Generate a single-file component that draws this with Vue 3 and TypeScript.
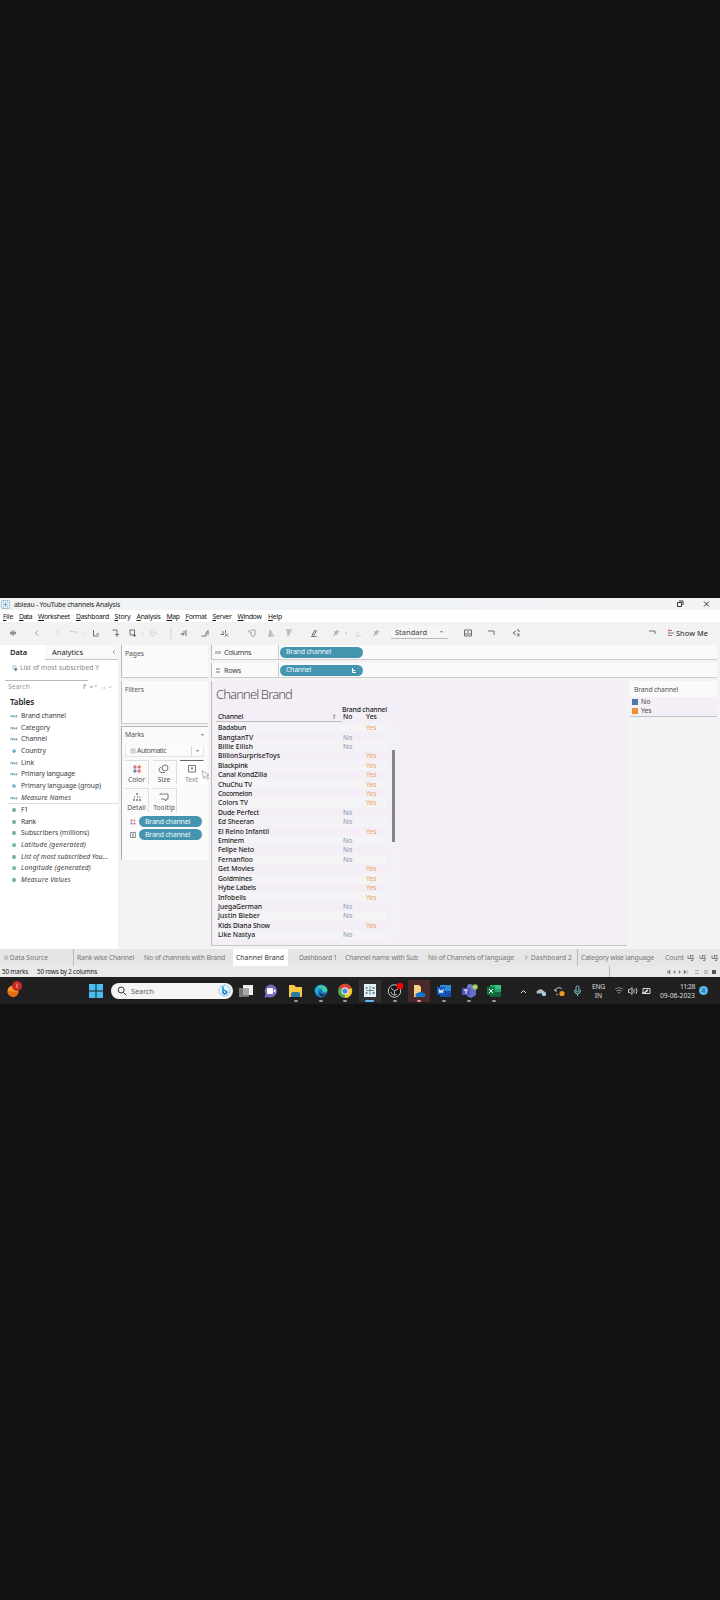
<script setup lang="ts">
interface Item { t: string; w: number; gap?: number }
interface Field extends Item { kind: string; italic?: boolean }

// Adjusts tracking so a label occupies its designed width.
const vFit = {
  mounted(el: HTMLElement, b: { value: number }) {
    const natural = el.getBoundingClientRect().width
    const count = (el.textContent || '').trim().length
    if (b.value && count) el.style.letterSpacing = `${(b.value - natural) / count}px`
  },
}

const menus: Item[] = [
  { t: 'File', w: 10, gap: 3 }, { t: 'Data', w: 13, gap: 6 }, { t: 'Worksheet', w: 32, gap: 6 },
  { t: 'Dashboard', w: 33, gap: 6 }, { t: 'Story', w: 16, gap: 5.5 }, { t: 'Analysis', w: 24, gap: 6 },
  { t: 'Map', w: 13, gap: 6 }, { t: 'Format', w: 21, gap: 6 }, { t: 'Server', w: 19, gap: 6 },
  { t: 'Window', w: 24, gap: 6 }, { t: 'Help', w: 14, gap: 6.5 },
]

const I = {
  logo: 'M5 2V8M2 5H8M3 3.5V6.5M7 3.5V6.5',
  back: 'M6 2.5L3.5 5L6 7.5', fwd: 'M4 2.5L6.5 5L4 7.5', undo: 'M2 5V3.5H7V5M2 3.5L3.5 2M9 3V5',
  dot: 'M4.3 5H5.7', save: 'M2.5 2V8H7.5M5.5 6H8', add: 'M2.5 2H7V5M5 6.5H9M7 5V9',
  pin: 'M2.5 2H7.5V7H3V2M6 7.5H9M7.5 6V9', ring: 'M5 2A3 3 0 1 1 4.9 2M3 5H7', pen: 'M1.5 6H5V3M4 7.5V5M7 2V8',
  penb: 'M1.5 8H6V5M6 5L8 2.5V7', barx: 'M1.5 6.5H5M4 3V7M6.5 2V5M6 5.5L9 8.5M9 5.5L6 8.5', swap: 'M2 2V4H4M4 2H8V5M4 4V7L6 9L8 7V5',
  asc: 'M2 8H8M3 6H7M4 4H6M4 2V8', desc: 'M2 2H8M3 4H7M4 6H6M4 2V8', mark: 'M3 7L6 2L7.5 3L5 7H3M2 8.5H7.5',
  clip: 'M3 8L6 2M5 7L8 3M3 4H7', under: 'M2 8H8M5 3V6', pic: 'M1.5 2H8.5V8H1.5ZM3 7V5M5 7V3M7 7V5', pres: 'M2 3H8V7',
  share: 'M2 5L5 3M2 5L5 7M6 2H8V4M6 6H8V8H6',
}
const tools = [
  { d: I.logo, x: 13, k: 'strong' }, { d: I.back, x: 37, k: 'soft' }, { d: I.fwd, x: 57, k: 'pale' }, { d: I.undo, x: 73, k: 'pale' },
  { d: I.dot, x: 85, k: 'pale' }, { d: I.save, x: 96, k: 'strong' }, { d: I.add, x: 115, k: 'strong' }, { d: I.pin, x: 132, k: 'strong' },
  { d: I.dot, x: 143, k: 'pale' }, { d: I.ring, x: 153, k: 'pale' }, { d: 'M5 -1V11', x: 171, k: 'pale' }, { d: I.pen, x: 184, k: 'strong' }, { d: I.penb, x: 205, k: 'strong' },
  { d: I.barx, x: 224, k: 'strong' }, { d: I.swap, x: 252, k: 'soft' }, { d: I.asc, x: 271, k: 'soft' }, { d: I.desc, x: 289, k: 'soft' },
  { d: I.mark, x: 314, k: 'strong' }, { d: I.clip, x: 336, k: 'soft' }, { d: I.dot, x: 346, k: 'soft' }, { d: I.under, x: 358, k: 'pale' }, { d: I.clip, x: 376, k: 'soft' },
].map((v, i, a) => ({ ...v, gap: v.x - 5 - (i ? a[i - 1].x + 5 : 0) }))

const fields: Field[] = [
  { t: 'Brand channel', w: 45, kind: 'abc' }, { t: 'Category', w: 29, kind: 'abc' }, { t: 'Channel', w: 26, kind: 'abc' },
  { t: 'Country', w: 25, kind: 'geo' }, { t: 'Link', w: 13, kind: 'abc' }, { t: 'Primary language', w: 54, kind: 'abc' },
  { t: 'Primary language (group)', w: 80, kind: 'grp' }, { t: 'Measure Names', w: 50, kind: 'abc', italic: true },
]
const measures: Field[] = [
  { t: 'F1', w: 7, kind: 'num' }, { t: 'Rank', w: 15, kind: 'num' }, { t: 'Subscribers (millions)', w: 68, kind: 'num' },
  { t: 'Latitude (generated)', w: 65, kind: 'globe', italic: true }, { t: 'List of most subscribed You…', w: 87, kind: 'num', italic: true },
  { t: 'Longitude (generated)', w: 70, kind: 'globe', italic: true }, { t: 'Measure Values', w: 50, kind: 'num', italic: true },
]
const rows: [string, number, boolean][] = [
  ['Badabun', 28, true], ['BangtanTV', 35, false], ['Billie Eilish', 35, false], ['BillionSurpriseToys', 62, true],
  ['Blackpink', 30, true], ['Canal KondZilla', 49, true], ['ChuChu TV', 34, true], ['Cocomelon', 34, true], ['Colors TV', 30, true],
  ['Dude Perfect', 41, false], ['Ed Sheeran', 36, false], ['El Reino Infantil', 51, true], ['Eminem', 26, false],
  ['Felipe Neto', 36, false], ['Fernanfloo', 35, false], ['Get Movies', 36, true], ['Goldmines', 34, true], ['Hybe Labels', 38, true],
  ['Infobells', 28, true], ['JuegaGerman', 44, false], ['Justin Bieber', 42, false], ['Kids Diana Show', 52, true], ['Like Nastya', 37, false],
]
const cards = ['Color', 'Size', 'Text', 'Detail', 'Tooltip']
const sheets = [
  { t: '⌸ Data Source', w: 44, cell: 74, pad: 4, k: 'line' }, { t: 'Rank wise Channel', w: 57, cell: 67, pad: 3, k: '' },
  { t: 'No of channels with Brand', w: 81, cell: 92, pad: 3, k: '' }, { t: 'Channel Brand', w: 48, cell: 55, pad: 3, k: 'on' },
  { t: 'Dashboard 1', w: 38, cell: 54, pad: 11, k: '' }, { t: 'Channel name with Sub', w: 73, cell: 82, pad: 3, k: '' },
  { t: 'No of Channels of language', w: 86, cell: 98, pad: 4, k: '' }, { t: '⊦  Dashboard 2', w: 47, cell: 56, pad: 3, k: 'line' },
  { t: 'Category wise language', w: 73, cell: 84, pad: 3, k: '' }, { t: 'Count', w: 19, cell: 25, pad: 3, k: '' },
]
const apps = ['view', 'chat', 'folder', 'edge', 'chrome', 'tableau', 'obs', 'cloudfolder', 'word', 'teams', 'excel']
</script>

<template>
  <div class="screen">
    <div class="window">
      <header class="title">
        <svg width="9" height="9" viewBox="0 0 9 9"><rect x=".5" y=".5" width="8" height="8" rx="1" fill="#e8f5f8" stroke="#9fc6d0" /><path d="M4.5 2.5V6.5M2.5 4.5H6.5M2 2H3M6 2H7M2 7H3M6 7H7" stroke="#4c92a5" stroke-width=".8" /></svg>
        <span v-fit="106" class="name">ableau - YouTube channels Analysis</span>
        <svg class="winbtns" width="36" height="10" viewBox="0 0 36 10" fill="none" stroke="#222"><path d="M2.5 3.5H6.5V7.5H2.5ZM4 2H8V6M29 2.5L34 7.5M34 2.5L29 7.5" stroke-width=".9" /></svg>
      </header>
      <nav class="menu">
        <span v-for="m in menus" :key="m.t" class="mi" :style="{ marginLeft: m.gap + 'px', width: m.w + 'px' }"><span v-fit="m.w"><u>{{ m.t[0] }}</u>{{ m.t.slice(1) }}</span></span>
      </nav>
      <div class="toolbar">
        <svg v-for="t in tools" :key="t.x" :class="['tool', t.k]" viewBox="0 0 10 10" :style="{ marginLeft: t.gap + 'px' }"><path :d="t.d" /></svg>
        <div class="standard"><span v-fit="32">Standard</span><i class="car"></i></div>
        <svg class="tool strong pic" viewBox="0 0 10 10"><path :d="I.pic" /></svg>
        <svg class="tool strong pr" viewBox="0 0 10 10"><path :d="I.pres" /></svg>
        <svg class="tool strong sh" viewBox="0 0 10 10"><path :d="I.share" /></svg>
        <svg class="tool strong pw" viewBox="0 0 10 10"><path d="M2 3H8V6" /></svg>
        <svg class="show" viewBox="0 0 6 8"><path d="M.5 0V7" stroke="#c9a3a3" /><path d="M1 1.5H4M1 6.5H4" stroke="#b66" /><path d="M1 4H6" stroke="#667fa5" /></svg>
        <span v-fit="32" class="showme">Show Me</span>
      </div>

      <main class="work">
        <aside class="data">
          <div class="tabs"><b><span v-fit="17">Data</span></b><div class="ana"><span v-fit="31">Analytics</span><svg width="4" height="6" viewBox="0 0 4 6"><path d="M3 1L1 3L3 5" fill="none" stroke="#888" stroke-width=".8" /></svg></div></div>
          <div class="source"><svg width="6" height="8" viewBox="0 0 6 8"><path d="M1 1V5H3M2 2H4V5" fill="none" stroke="#9cb0ba" stroke-width=".8" /><path d="M2 4.5H5.5L3.8 7.5Z" fill="#36718b" /></svg><span v-fit="79">List of most subscribed Y</span></div>
          <div class="search"><span v-fit="22">Search</span><svg width="32" height="6" viewBox="0 0 32 6" fill="none" stroke="#888" stroke-width=".8"><path d="M2 1H5L3 3V5M9 2L10.5 4L12 2M14 2H16M21 4H22M23 4H24M28 2.5L29 3.5L30 2.5" /></svg></div>
          <h4><span v-fit="24">Tables</span></h4>
          <ul>
            <li v-for="f in fields" :key="f.t" :class="{ it: f.italic }">
              <svg width="8" height="6" viewBox="0 0 8 6"><path v-if="f.kind === 'abc'" d="M1 4V2.5H2.5V4.5M4 2V4H5V2.8M7.3 2.6H6.3V4H7.3" fill="none" stroke="#568da6" stroke-width=".8" /><g v-else><circle cx="4" cy="3" r="1.8" fill="#4996b2" /><path v-if="f.kind === 'grp'" d="M2 5L6 1" stroke="#fff" stroke-width=".7" /><path v-else d="M4 1V3H2" fill="none" stroke="#cde" stroke-width=".7" /></g></svg>
              <span v-fit="f.w">{{ f.t }}</span>
            </li>
          </ul>
          <ul class="meas">
            <li v-for="f in measures" :key="f.t" :class="{ it: f.italic }">
              <svg width="8" height="6" viewBox="0 0 8 6"><path v-if="f.kind === 'num'" d="M3.3 1V5M4.8 1V5M2.3 2.2H5.8M2.3 3.8H5.8" stroke="#5f9d83" stroke-width=".9" /><g v-else><circle cx="4" cy="3" r="2" fill="#5bae91" /><path d="M4 1V3H2" stroke="#d4eee5" fill="none" stroke-width=".6" /></g></svg>
              <span v-fit="f.w">{{ f.t }}</span>
            </li>
          </ul>
        </aside>

        <section class="shelves">
          <div class="card pages"><span v-fit="19">Pages</span></div>
          <div class="card filters"><span v-fit="19">Filters</span></div>
          <div class="card marks">
            <div class="mh"><span v-fit="19">Marks</span><i class="car"></i></div>
            <div class="auto"><svg width="6" height="6" viewBox="0 0 6 6"><path d="M1 1H5V5H1ZM2 2H4M3 2V4" fill="none" stroke="#aaa" stroke-width=".7" /></svg><span v-fit="29">Automatic</span><em><i class="car"></i></em></div>
            <div class="grid">
              <div v-for="c in cards" :key="c" :class="['mk', c]">
                <svg width="12" height="12" viewBox="0 0 12 12" fill="none" stroke="#777">
                  <g v-if="c === 'Color'" stroke="none"><circle cx="4" cy="4" r="1.7" fill="#d2738e" /><circle cx="8.2" cy="4" r="1.7" fill="#dd7a62" /><circle cx="4" cy="8" r="1.7" fill="#6287bc" /><circle cx="8.2" cy="8" r="1.7" fill="#ef7180" /></g>
                  <path v-else-if="c === 'Size'" d="M10 5A3 3 0 1 1 7 2A3 3 0 0 1 10 5M3 4A2.5 2.5 0 0 0 5 9.5H7" />
                  <path v-else-if="c === 'Text'" d="M2.5 2.5H9.5V9H2.5ZM4.5 5H7.5M6 5V7" />
                  <path v-else-if="c === 'Detail'" d="M5 3H7M3 6H4M6 6H7M8.5 6H9.5M2 9H4M5 9H7M8 9H10" stroke-width="1.4" />
                  <path v-else d="M2 4V3H10V8H8V10L6 8H3" />
                </svg><span>{{ c }}</span>
              </div>
            </div>
            <div class="enc"><svg width="8" height="8" viewBox="0 0 8 8"><g><circle cx="2.5" cy="2.5" r="1.1" fill="#c96a7c" /><circle cx="5.5" cy="2.5" r="1.1" fill="#dd9a7a" /><circle cx="2.5" cy="5.5" r="1.1" fill="#6b8bbd" /><circle cx="5.5" cy="5.5" r="1.1" fill="#d96c6c" /></g></svg><span class="pill"><span v-fit="45">Brand channel</span></span></div>
            <div class="enc"><svg width="8" height="8" viewBox="0 0 8 8"><path d="M1.5 1.5H6.5V6.5H1.5ZM3 3H5M3 5H5M4 3V5" fill="none" stroke="#777" stroke-width=".8" /></svg><span class="pill"><span v-fit="45">Brand channel</span></span></div>
            <svg class="cursor" width="7" height="12" viewBox="0 0 7 12"><path d="M1 1V9L3 7.2L4.5 10.5L5.8 9.8L4.5 6.8H6.8Z" fill="#fff" stroke="#999" stroke-width=".7" /></svg>
          </div>
        </section>

        <section class="canvas">
          <div class="shelf"><div class="sl"><svg width="6" height="5" viewBox="0 0 6 5"><path d="M1 1V4M3 1V4M5 1V4" stroke="#777" stroke-width=".9" /></svg><span v-fit="27">Columns</span></div><span class="pill"><span v-fit="45">Brand channel</span></span></div>
          <div class="shelf"><div class="sl"><svg width="6" height="5" viewBox="0 0 6 5"><path d="M1 1H5M1 4H5" stroke="#777" /></svg><span v-fit="17">Rows</span></div><span class="pill"><span v-fit="25">Channel</span><svg width="6" height="5" viewBox="0 0 6 5"><path d="M1.5 0V4.5H5M2 2.5H4" stroke="#fff" fill="none" /></svg></span></div>
          <div class="lower">
            <div class="viz">
              <h2><span v-fit="76">Channel Brand</span></h2>
              <div class="dimhead"><span v-fit="45">Brand channel</span></div>
              <div class="cols"><div class="ch"><span v-fit="25">Channel</span><svg width="4" height="5" viewBox="0 0 4 5"><path d="M1 1H3V2L1 4H3" stroke="#777" fill="none" stroke-width=".7" /></svg></div><span class="no">No</span><span>Yes</span></div>
              <div class="tbl">
                <div v-for="r in rows" :key="r[0]" class="row"><div><span v-fit="r[1]">{{ r[0] }}</span></div><span class="n">{{ r[2] ? '' : 'No' }}</span><span class="y">{{ r[2] ? 'Yes' : '' }}</span></div>
                <i class="thumb"></i>
              </div>
            </div>
            <div class="legend"><div class="lt"><span v-fit="44">Brand channel</span></div><p><i></i><span>No</span></p><p class="or"><i></i><span>Yes</span></p></div>
          </div>
        </section>
      </main>

      <div class="sheets">
        <div v-for="s in sheets" :key="s.t" :class="['sheet', s.k]" :style="{ width: s.cell + 'px', paddingLeft: s.pad + 'px' }"><span v-fit="s.w">{{ s.t }}</span></div>
        <svg width="32" height="8" viewBox="0 0 32 8" fill="none" stroke="#777" stroke-width=".9"><path v-for="x in [1, 13, 25]" :key="x" :d="`M${x} 1.5V4.5H${x + 5}M${x + 2.5} 1.5V4.5M${x + 2} 1.5H${x + 5}V6.5H${x + 3}`" /></svg>
      </div>
      <div class="status"><span v-fit="26">50 marks</span><span v-fit="60" class="rc">50 rows by 2 columns</span>
        <div class="nav"><svg width="52" height="6" viewBox="0 0 52 6"><path d="M1.5 1V5M4 1L2 3L4 5ZM9 1.5L7.5 3L9 4.5ZM13 1.5L14.5 3L13 4.5ZM18 1L20 3L18 5ZM21 1V5" fill="#777" stroke="#777" stroke-width=".5" /><path d="M29 1.5H33M29 4.5H33" stroke="#aaa" /><path d="M38 1.5H42M38 4H42M39 1V5M41 1V5" stroke="#b5b5b5" /><rect x="46" y="1" width="4" height="4" fill="#555" /></svg></div>
      </div>

      <footer class="taskbar">
        <svg class="weather" width="18" height="18" viewBox="0 0 18 18"><circle cx="8" cy="11" r="5.5" fill="#f39a20" /><path d="M2.5 11A5.5 5.5 0 0 0 13.5 12Z" fill="#e96d16" /><circle cx="12" cy="6" r="5" fill="#c42b24" /><path d="M12 3.5V8" stroke="#f5b3a0" /></svg>
        <svg class="win" width="14" height="14" viewBox="0 0 14 14" fill="#49bdf1"><path d="M0 0H6.5V6.5H0ZM7.5 0H14V6.5H7.5ZM0 7.5H6.5V14H0ZM7.5 7.5H14V14H7.5Z" /></svg>
        <div class="find"><svg width="10" height="10" viewBox="0 0 10 10" fill="none" stroke="#333"><circle cx="4.2" cy="4" r="3" /><path d="M6.5 6.5L9 9" /></svg><span v-fit="23">Search</span><svg class="bing" width="13" height="13" viewBox="0 0 13 13" fill="none"><circle cx="6.5" cy="6.5" r="5.5" fill="#e0f4ff" stroke="#72b9df" stroke-dasharray="3 1" /><path d="M5 2.5V9L7 10L9 8L6 6" stroke="#1681c9" stroke-width="1.5" /></svg></div>
        <div class="apps">
          <div v-for="a in apps" :key="a" :class="['app', 'app-' + a]">
            <svg width="16" height="16" viewBox="0 0 16 16">
              <g v-if="a === 'view'"><path d="M6 2H16V12H6Z" fill="#eee" /><path d="M2 5H12V14H2Z" fill="#777" /><path d="M6 5H12V12H6Z" fill="#aaa" /></g>
              <g v-else-if="a === 'chat'"><path d="M8 1.5A6.5 6.5 0 1 1 5 14L1.5 14.5L2.5 11A6.5 6.5 0 0 1 8 1.5Z" fill="#746dc2" /><rect x="4" y="5" width="6" height="6" rx="1" fill="#fff" /><path d="M10 8L12.5 6V10Z" fill="#eef" /></g>
              <g v-else-if="a === 'folder'"><path d="M1 2H6L8 4H14V14H1Z" fill="#f7c842" /><path d="M3 14V11Q3 9 5 9H10Q12 9 12 11V14Z" fill="#247da8" /></g>
              <g v-else-if="a === 'edge'"><circle cx="8" cy="8" r="6.5" fill="#1678c9" /><path d="M2 7A6.5 6.5 0 0 1 14.5 7Q14 10 10 9Q9 5 6 5Q3 5 2 7Z" fill="#42c9a1" /><path d="M7 8Q7 13 13 11L15 10Q12 14 8 13Q5 12 7 8Z" fill="#192b3c" /><path d="M2 8Q2 3 8 5Q4 7 6 12Q3 11 2 8Z" fill="#25a9db" /></g>
              <g v-else-if="a === 'chrome'"><circle cx="8" cy="8" r="7" fill="#4caa50" /><path d="M8 8L1.9 4.5A7 7 0 0 1 14.5 5Z" fill="#df4436" /><path d="M8 8L14.5 5A7 7 0 0 1 8 15Z" fill="#f7c737" /><circle cx="8" cy="8" r="3.5" fill="#fff" /><circle cx="8" cy="8" r="2.6" fill="#4686dc" /></g>
              <g v-else-if="a === 'tableau'"><rect x="2" y="1" width="12" height="13" fill="#e6f1f4" /><path d="M8 3V12M4 7.5H12M4.5 4V6M11.5 4V6M4.5 9V11M11.5 9V11M3.5 5H6M10 5H13M3.5 10H6M10 10H13" stroke="#4b7791" stroke-width=".8" /></g>
              <g v-else-if="a === 'obs'"><circle cx="7.5" cy="8" r="6.2" fill="#171717" stroke="#ccc" /><path d="M7.5 8L4 5M7.5 8V12M7.5 8L11 6M4 9A3.5 3.5 0 0 0 10 11" fill="none" stroke="#bbb" /><circle cx="13" cy="3" r="3.2" fill="#f00" /></g>
              <g v-else-if="a === 'cloudfolder'"><path d="M3 2H8L10 4V14H3Z" fill="#f7d083" /><path d="M6 14A2 2 0 0 1 7 10A3 3 0 0 1 12 10A2 2 0 0 1 13 14Z" fill="#1476ce" /></g>
              <g v-else-if="a === 'word'"><path d="M4 2H15V14H4Z" fill="#2d8bdc" /><path d="M4 8H15V14H4Z" fill="#174eac" /><rect x="1" y="4" width="8" height="8" fill="#185abd" /><path d="M3 6L4 10L5.2 7L6.3 10L7.4 6" fill="none" stroke="#fff" /></g>
              <g v-else-if="a === 'teams'"><circle cx="9" cy="4" r="3" fill="#7277d0" /><path d="M6 6H15V12L10 15L6 13Z" fill="#686dca" /><rect x="1" y="5" width="8" height="7" fill="#4f55b5" /><path d="M3 7H7M5 7V11" stroke="#fff" /><circle cx="14" cy="4" r="2.8" fill="#92c353" /><path d="M12.7 4L13.7 5L15.2 3" fill="none" stroke="#fff" stroke-width=".7" /></g>
              <g v-else><path d="M4 2H15V14H4Z" fill="#21a366" /><path d="M9 2H15V6H9Z" fill="#33c481" /><path d="M4 9H15V14H4Z" fill="#13623b" /><rect x="1" y="4" width="8" height="8" fill="#107c41" /><path d="M3 6L7 10M7 6L3 10" stroke="#fff" /></g>
            </svg><i v-if="a !== 'view' && a !== 'chat'"></i>
          </div>
        </div>
        <svg class="tray" width="66" height="14" viewBox="0 0 66 14" fill="none" stroke="#e8e8e8"><path d="M2 9L4.5 6.5L7 9" /><path d="M18 9.5A2 2 0 0 1 19 6.5A3 3 0 0 1 24 6.5A2 2 0 0 1 25 9.5Z" fill="#bbb" stroke="none" /><circle cx="25" cy="10" r="2.2" fill="#9cc9e6" stroke="none" /><path d="M36 7A4 4 0 0 1 43 5M36 5V7H38M37 10L39 11" stroke="#bbb" /><circle cx="43" cy="9.5" r="2.6" fill="#ef9a21" stroke="none" /><path d="M57 3.5Q57 2 58.5 2T60 3.5V7Q60 8 58.5 8T57 7ZM55.5 6Q55.5 10 58.5 10T61.5 6M58.5 10V12" stroke="#80c4d6" /></svg>
        <div class="lang"><span v-fit="13">ENG</span><span>IN</span></div>
        <svg class="net" width="42" height="14" viewBox="0 0 42 14" fill="none" stroke="#ddd"><path d="M4 5Q8 2 12 5" stroke="#777" /><path d="M5.5 7Q8 5 10.5 7M7 9Q8 8 9 9" stroke="#999" /><path d="M17.5 5.5H19L21 3.5V10.5L19 8.5H17.5ZM23 5V9M25 4Q27 7 25 10" stroke-width=".9" /><path d="M32 4.5H39V9.5H32Z" /><path d="M31 9H35M34 8L37 6" stroke-width="1.6" /></svg>
        <div class="clock"><span v-fit="15">11:28</span><span v-fit="35">09-06-2023</span></div>
        <span class="badge">4</span>
      </footer>
    </div>
  </div>
</template>

<style>
html, body { background: #121212; }
</style>
<style scoped>
.screen { width: 720px; height: 1600px; background: #121212; padding-top: 598px; box-sizing: border-box; overflow: hidden; font-family: "Noto Sans", "Open Sans", sans-serif; font-size: 6.8px; line-height: 10px; color: #3c3c3c; }
.screen * { box-sizing: border-box; }
.window { width: 720px; height: 406px; background: #f3f3f3; }
span { white-space: nowrap; flex: none; }
svg { display: block; flex: none; overflow: visible; }
h2, h4, ul, p { margin: 0; padding: 0; font-weight: 400; }
.title { height: 12px; display: flex; align-items: center; background: linear-gradient(90deg, #f3f2f3, #eef3f7 35%, #f0f2f5 65%, #f3f3f3); padding-left: 1px; }
.name { margin: 1px 0 0 4px; color: #222; }
.winbtns { margin-left: auto; margin-right: 9px; width: 36px; }
.menu { height: 12px; background: #fff; display: flex; align-items: center; color: #111; padding-top: 2px; }
.mi { display: block; }
.mi u { text-underline-offset: 1px; text-decoration-thickness: .6px; }
.toolbar { height: 23px; display: flex; align-items: center; background: #f2f2f2; padding-bottom: 2px; }
.tool { width: 10px; height: 10px; fill: none; stroke-width: 1; }
.strong { stroke: #707070; } .soft { stroke: #a2a2a2; } .pale { stroke: #d1d1d1; }
.standard { width: 57px; height: 13px; margin-left: 10px; padding: 0 5px 0 4px; display: flex; align-items: center; justify-content: space-between; border-bottom: 1px solid #bbb; background: #f5f5f5; font-size: 7.5px; }
.car { display: block; width: 3px; height: 2px; background: #888; clip-path: polygon(0 0, 100% 0, 50% 100%); }
.pic { margin-left: 15px; } .pr { margin-left: 13px; } .sh { margin-left: 15px; } .pw { margin-left: 126px; }
.show { width: 6px; height: 8px; margin-left: 11px; }
.showme { margin-left: 2px; font-size: 7.4px; color: #222; }
.work { height: 304px; display: flex; }
.data { width: 118px; background: #fff; }
.tabs { height: 15px; display: flex; font-size: 7.5px; color: #222; }
.tabs b { width: 45px; padding: 2px 0 0 10px; font-weight: 600; }
.ana { flex: 1; background: #f9f9f9; border-bottom: 1px solid #c8c8c8; display: flex; justify-content: space-between; align-items: center; padding: 0 2px 0 7px; }
.source { height: 21px; padding: 3px 0 0 12px; display: flex; align-items: flex-start; gap: 2px; color: #888; position: relative; }
.source svg { margin-top: 1px; }
.source::after { content: ""; position: absolute; left: 5px; top: 20px; width: 83px; height: 1px; background: #b9b9b9; }
.search { height: 11px; display: flex; align-items: center; padding-left: 8px; color: #999; }
.search svg { margin-left: 51px; }
h4 { height: 18px; padding: 5px 0 0 10px; font-size: 8px; font-weight: 600; color: #222; }
ul { list-style: none; height: 93.6px; }
li { height: 11.7px; display: flex; align-items: center; padding-left: 10px; gap: 3px; color: #3c3c3c; }
.it { font-style: italic; }
.meas { border-top: 1px solid #ddd; margin-left: 8px; margin-top: -.5px; }
.meas li { padding-left: 2px; }
.shelves { width: 87px; margin-left: 3px; display: flex; flex-direction: column; }
.card { background: #fafafa; border-left: 1px solid #bbb; border-bottom: 1px solid #ccc; padding: 4px 0 0 3px; color: #555; }
.pages { height: 33px; } .filters { height: 43px; margin-top: 3px; }
.marks { height: 134px; margin-top: 2px; border-top: 1px solid #b5b5b5; border-bottom: 0; padding: 0; border-left-color: #aaa; position: relative; }
.mh { height: 19px; padding: 0 4px 3px 3px; display: flex; justify-content: space-between; align-items: center; }
.auto { width: 79px; height: 11px; margin-left: 3px; border: 1px solid #e4e4e4; border-width: 0 1px 1px; background: #fbfbfb; display: flex; align-items: center; padding-left: 4px; gap: 1px; }
.auto em { margin-left: auto; width: 12px; height: 11px; border-left: 1px solid #d7d7d7; display: flex; align-items: center; justify-content: center; }
.grid { display: grid; grid-template-columns: 24px 24px 24px; grid-auto-rows: 24px; gap: 3.5px; margin: 3px 0 0 3px; }
.mk { border: 1px solid #ddd; border-width: 1px 1px 0 0; display: flex; flex-direction: column; align-items: center; padding-top: 2px; font-size: 6.8px; }
.mk span { line-height: 9px; }
.mk.Text { background: #fff; border-color: #666 #fff #fff; }
.mk.Text span { color: #888; }
.enc { display: flex; align-items: center; height: 12.8px; padding-left: 7px; gap: 2px; }
.grid + .enc { margin-top: 4px; }
.cursor { position: absolute; left: 80px; top: 42px; transform: rotate(-12deg); }
.pill { height: 11px; border-radius: 6px; background: #4595b0; color: #edf8fb; display: flex; align-items: center; width: 63px; padding-left: 6px; font-size: 7px; }
.canvas { flex: 1; margin-left: 3px; }
.shelf { width: 506px; height: 15px; background: #fafafa; border-left: 1px solid #bbb; border-bottom: 1px solid #ccc; margin-bottom: 3px; display: flex; align-items: center; }
.shelf .pill { width: 83px; margin-left: 1px; }
.shelf .pill svg { margin-left: auto; margin-right: 6px; }
.sl { width: 67px; height: 14px; display: flex; align-items: center; gap: 3px; padding-left: 3px; border-right: 1px solid #ccc; font-size: 7.2px; }
.lower { display: flex; }
.viz { width: 416px; height: 265px; background: #f4eff6; border-left: 1px solid #bbb; border-bottom: 1px solid #c9c9c9; }
h2 { height: 22px; padding: 4px 0 0 4px; font-size: 13px; line-height: 19px; font-weight: 300; color: #555; }
.dimhead { height: 9px; padding: 2px 0 0 130px; color: #222; font-weight: 500; line-height: 9px; }
.cols { height: 11px; display: flex; color: #222; line-height: 9px; padding: 0 0 1px 4px; font-weight: 500; }
.ch { width: 126px; border-bottom: 1px solid #c4bfc6; display: flex; align-items: center; justify-content: space-between; padding: 0 6px 0 2px; }
.no { width: 22px; } .no + span { padding-left: 1px; }
.cols .no { margin-left: 1px; }
.tbl { position: relative; width: 184px; height: 216.4px; }
.row { height: 9.41px; display: grid; grid-template-columns: 127px 22px 26px; align-items: center; margin-left: 4px; width: 171px; color: #222; font-weight: 500; line-height: 9px; }
.row > div { padding-left: 2px; display: flex; }
.row:nth-child(odd) { background: #f4f3f5; }
.n { color: #8293ad; font-weight: 400; } .y { color: #eca35c; padding-left: 1px; font-weight: 400; }
.tbl::after { content: ""; position: absolute; right: 0; top: 0; width: 6px; height: 216px; background: #f3f2f3; }
.thumb { position: absolute; z-index: 1; right: 1px; top: 27px; width: 3px; height: 92px; background: #858585; }
.legend { width: 87px; height: 36px; margin-left: 3px; border-bottom: 1px solid #c4c4c4; background: #f4eff6; }
.lt { height: 16px; padding: 4px 0 0 4px; background: #fafafa; color: #555; }
.legend p { height: 9px; display: flex; align-items: center; gap: 3px; padding-left: 2px; }
.legend i { width: 6px; height: 6px; background: #4e79a7; } .legend .or i { background: #ec9132; }
.sheets { height: 17px; display: flex; align-items: center; background: #e6e6e6; color: #777; }
.sheet { height: 17px; padding-top: 4px; border-right: 1px solid transparent; flex: none; }
.sheet.line { border-right-color: #bbb; } .sheet.on { background: #fff; color: #333; }
.status { height: 11px; background: #e9e9e9; display: flex; align-items: center; padding-left: 2px; color: #222; font-size: 6.3px; }
.rc { margin-left: 9px; }
.nav { margin-left: auto; height: 11px; width: 111px; border-left: 1px solid #bbb; display: flex; align-items: center; justify-content: flex-end; padding-right: 2px; }
.taskbar { height: 27px; background: #202020; display: flex; align-items: center; color: #ddd; }
.weather { margin-left: 5px; margin-top: -4px; } .win { margin-left: 66px; }
.find { width: 122px; height: 16px; margin-left: 8px; border-radius: 8px; background: #f4f4f4; color: #666; display: flex; align-items: center; padding-left: 6px; font-size: 7.3px; }
.find span { margin-left: 4px; } .bing { margin-left: auto; margin-right: 2px; }
.apps { display: flex; margin-left: 1px; height: 27px; }
.app { width: 24.73px; height: 27px; display: flex; flex-direction: column; align-items: center; padding-top: 5.5px; position: relative; }
.app-view svg { margin-left: -2px; }
.app i { position: absolute; bottom: 2px; width: 4px; height: 2px; border-radius: 1px; background: #999; }
.app-tableau { background: linear-gradient(#303133, #303133) center 3px / 22px 22px no-repeat; } .app-tableau i { width: 9px; background: #5cbcea; }
.app-cloudfolder { background: linear-gradient(#492929, #492929) center 3px / 22px 22px no-repeat; } .app-cloudfolder i { background: #f48c92; }
.tray { margin-left: 13px; }
.lang { width: 15px; display: flex; flex-direction: column; align-items: center; margin-left: 6px; line-height: 9px; font-size: 6.8px; }
.net { margin-left: 5px; }
.clock { width: 38px; margin-left: 4px; display: flex; flex-direction: column; align-items: flex-end; line-height: 9px; font-size: 6.8px; }
.badge { width: 9px; height: 9px; margin-left: 4px; border-radius: 5px; background: #58bdf0; color: #174d6c; text-align: center; line-height: 9px; font-size: 6.5px; }
</style>
